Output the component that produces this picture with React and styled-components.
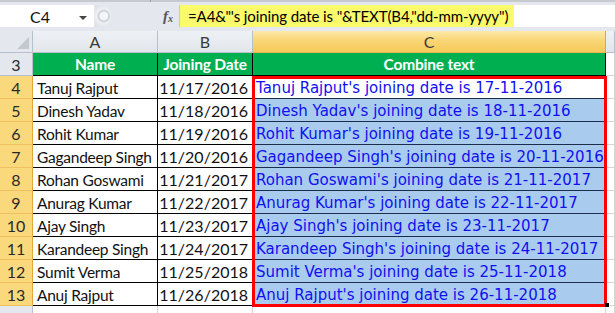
import styled, { createGlobalStyle } from 'styled-components';

const GlobalStyle = createGlobalStyle`
  html, body {
    margin: 0;
    padding: 0;
    background: #ffffff;
    overflow: hidden;
  }
  * {
    box-sizing: border-box;
  }
`;

const Sheet = styled.div`
  width: 615px;
  height: 313px;
  overflow: hidden;
  font-family: Lato, "Open Sans", sans-serif;
  background: #e4e8ee;
`;

const FormulaBar = styled.div`
  display: flex;
  align-items: stretch;
  height: 31px;
  padding: 3px 0 4px 0;
  border-top: 2px solid #c6cad0;
  background: #e4e8ee;
  position: relative;
  &::before {
    content: '';
    position: absolute;
    top: -2px;
    left: 150px;
    width: 1px;
    height: 2px;
    background: #9aa0a8;
  }
`;

const NameBox = styled.div`
  display: flex;
  align-items: center;
  width: 94px;
  padding-left: 30px;
  background: #ffffff;
  font-size: 16px;
  color: #111;
  position: relative;
`;

const DropArrow = styled.span`
  position: absolute;
  right: 7px;
  top: 11px;
  width: 0;
  height: 0;
  border-left: 4px solid transparent;
  border-right: 4px solid transparent;
  border-top: 4px solid #444;
`;

const Splitter = styled.div`
  width: 16px;
  margin-left: 1px;
  border-radius: 0 12px 12px 0;
  background: radial-gradient(circle at 55% 50%, #f4f5f7 0 4px, #c7ccd3 5px, #eef0f3 7px, #d9dde2 100%);
`;

const FxArea = styled.div`
  display: flex;
  align-items: center;
  flex: 1;
  background: #ffffff;
`;

const FxLabel = styled.span`
  width: 68px;
  padding-left: 52px;
  font-family: "Liberation Serif", serif;
  font-style: italic;
  font-weight: bold;
  font-size: 15px;
  color: #555;
  align-self: stretch;
  display: flex;
  align-items: center;
  background: #e4e8ee;
  small {
    font-size: 10px;
    margin-top: 4px;
  }
`;

const FormulaText = styled.div`
  align-self: stretch;
  display: flex;
  align-items: center;
  padding: 0 6px 0 8px;
  background: #fafa6a;
  font-size: 15px;
  letter-spacing: -0.1px;
  color: #000;
  white-space: pre;
  border-left: 1px solid #c6cad0;
`;

const Grid = styled.div`
  position: relative;
  display: grid;
  grid-template-columns: 33px 125px 95px 353px 1fr;
  grid-template-rows: 22px 23px repeat(10, 23px) 23px;
  background: #ffffff;
`;

const Corner = styled.div`
  background: #e4e8ee;
  border-right: 1px solid #b8c0cc;
  border-bottom: 1px solid #b8c0cc;
  position: relative;
  &::after {
    content: '';
    position: absolute;
    right: 3px;
    bottom: 3px;
    border-left: 12px solid transparent;
    border-bottom: 12px solid #c3c8cf;
  }
`;

const ColHead = styled.div`
  display: flex;
  align-items: center;
  justify-content: center;
  font-size: 16px;
  color: #3a3a3a;
  border-right: 1px solid ${(p) => (p.$active ? '#e0a73a' : '#b8c0cc')};
  border-bottom: 1px solid ${(p) => (p.$active ? '#e9b44c' : '#b8c0cc')};
  background: ${(p) =>
    p.$active
      ? 'linear-gradient(#fde9a8, #f9d675 45%, #f6c95c)'
      : 'linear-gradient(#eef1f4, #e2e6eb)'};
`;

const RowHead = styled.div`
  display: flex;
  align-items: center;
  justify-content: center;
  font-size: 16px;
  color: #2a2a2a;
  border-right: 1px solid ${(p) => (p.$active ? '#e0a73a' : '#b8c0cc')};
  border-bottom: 1px solid ${(p) => (p.$active ? '#f0c060' : '#b8c0cc')};
  background: ${(p) => (p.$active ? '#f9d97c' : '#e4e8ee')};
`;

const HeadCell = styled.div`
  display: flex;
  align-items: center;
  justify-content: center;
  padding: 0 2px;
  background: #00b050;
  color: #ffffff;
  font-weight: bold;
  font-size: 15.5px;
  letter-spacing: -0.2px;
  border-right: 1px solid #000;
  border-bottom: 1px solid #000;
  white-space: nowrap;
  overflow: hidden;
`;

const Cell = styled.div`
  display: flex;
  align-items: center;
  justify-content: ${(p) => (p.$right ? 'flex-end' : 'flex-start')};
  padding: 1px 4px 0;
  font-size: ${(p) => (p.$right ? '16px' : '15.5px')};
  letter-spacing: ${(p) => (p.$right ? '0' : '-0.25px')};
  color: #111;
  border-right: 1px solid #000;
  border-bottom: 1px solid #000;
  white-space: nowrap;
  overflow: hidden;
`;

const TextCell = styled.div`
  display: flex;
  align-items: center;
  padding: 1px 3px 0;
  font-family: "DejaVu Sans", Verdana, sans-serif;
  font-size: 15px;
  color: #1010f0;
  background: ${(p) => (p.$current ? '#ffffff' : '#a9cbee')};
  border-right: 1px solid #000;
  border-bottom: 1px solid #1c2c4c;
  white-space: nowrap;
  overflow: hidden;
`;

const Blank = styled.div`
  border-right: 1px solid #d4d4d4;
  border-bottom: 1px solid #d4d4d4;
  background: #ffffff;
`;

const SelectionFrame = styled.div`
  position: absolute;
  left: 252px;
  top: 45px;
  width: 355px;
  height: 231px;
  border: 3px solid #ff0000;
  pointer-events: none;
`;

const FillHandle = styled.div`
  position: absolute;
  left: 605px;
  top: 272px;
  width: 5px;
  height: 5px;
  background: #000;
  border: 1px solid #fff;
  border-left: none;
  border-top: none;
`;

const rows = [
  ['Tanuj Rajput', '11/17/2016', '17-11-2016'],
  ['Dinesh Yadav', '11/18/2016', '18-11-2016'],
  ['Rohit Kumar', '11/19/2016', '19-11-2016'],
  ['Gagandeep Singh', '11/20/2016', '20-11-2016'],
  ['Rohan Goswami', '11/21/2017', '21-11-2017'],
  ['Anurag Kumar', '11/22/2017', '22-11-2017'],
  ['Ajay Singh', '11/23/2017', '23-11-2017'],
  ['Karandeep Singh', '11/24/2017', '24-11-2017'],
  ['Sumit Verma', '11/25/2018', '25-11-2018'],
  ['Anuj Rajput', '11/26/2018', '26-11-2018'],
];

export default function App() {
  return (
    <>
      <GlobalStyle />
      <Sheet>
        <FormulaBar>
          <NameBox>
            C4
            <DropArrow />
          </NameBox>
          <Splitter />
          <FxArea>
            <FxLabel>
              f<small>x</small>
            </FxLabel>
            <FormulaText>{'=A4&"\'s joining date is "&TEXT(B4,"dd-mm-yyyy")'}</FormulaText>
          </FxArea>
        </FormulaBar>

        <Grid>
          <Corner />
          <ColHead>A</ColHead>
          <ColHead>B</ColHead>
          <ColHead $active>C</ColHead>
          <ColHead />

          <RowHead>3</RowHead>
          <HeadCell>Name</HeadCell>
          <HeadCell>Joining Date</HeadCell>
          <HeadCell>Combine text</HeadCell>
          <Blank />

          {rows.map(([name, date, dmy], i) => (
            <Row key={name} n={i + 4} name={name} date={date} dmy={dmy} current={i === 0} />
          ))}

          <RowHead>14</RowHead>
          <Blank />
          <Blank />
          <Blank />
          <Blank />

          <SelectionFrame />
          <FillHandle />
        </Grid>
      </Sheet>
    </>
  );
}

function Row({ n, name, date, dmy, current }) {
  return (
    <>
      <RowHead $active>{n}</RowHead>
      <Cell>{name}</Cell>
      <Cell $right>{date}</Cell>
      <TextCell $current={current}>{`${name}'s joining date is ${dmy}`}</TextCell>
      <Blank />
    </>
  );
}
